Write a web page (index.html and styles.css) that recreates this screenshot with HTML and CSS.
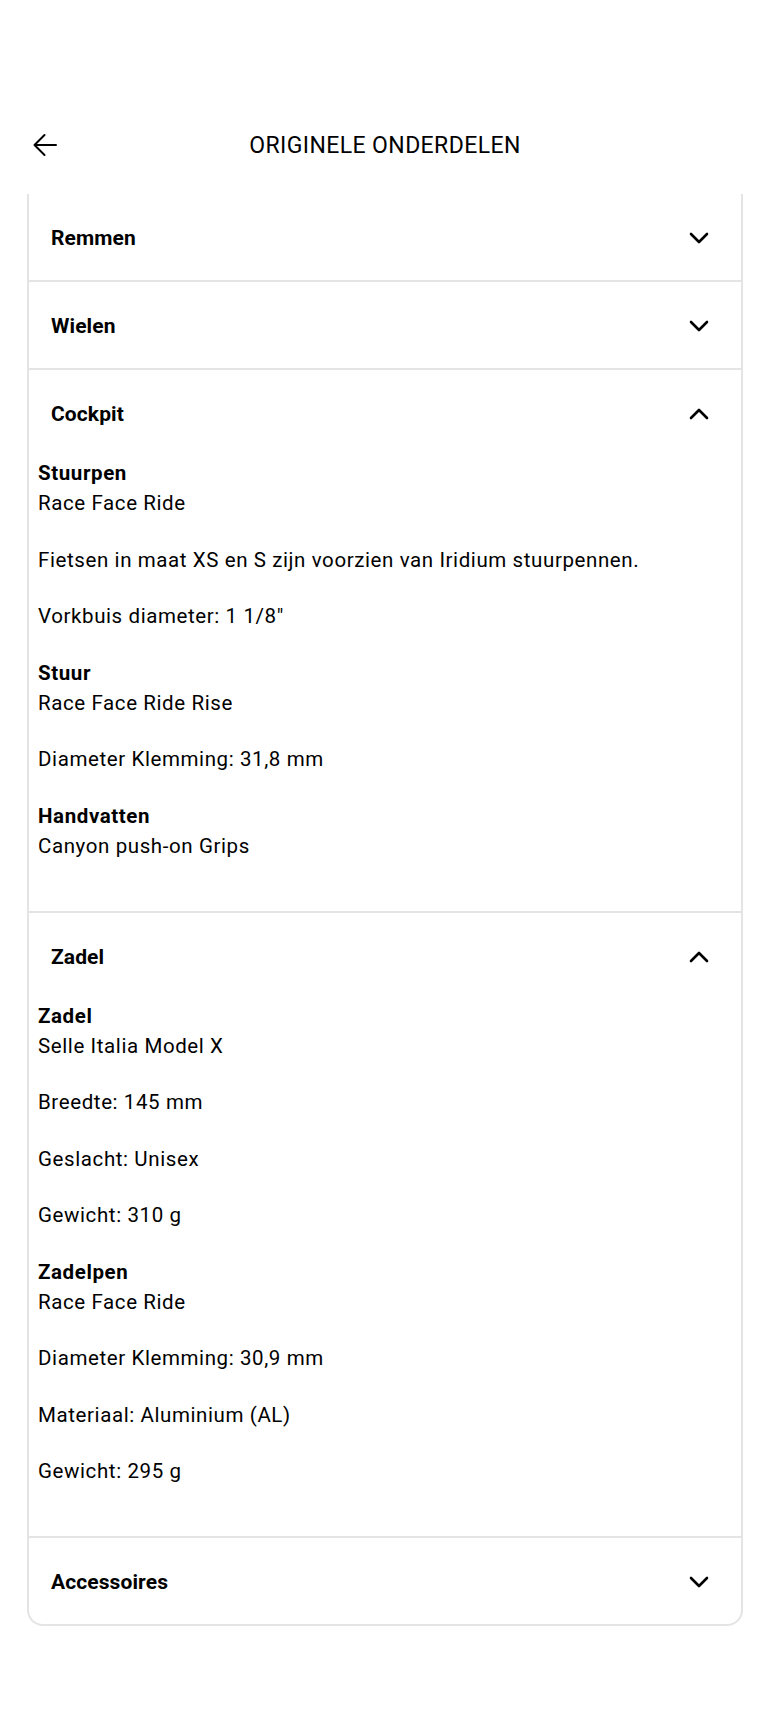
FILE: index.html
```html
<!DOCTYPE html>
<html lang="nl">
<head>
<meta charset="utf-8">
<title>Originele onderdelen</title>
<link rel="stylesheet" href="styles.css">
</head>
<body>
<header class="topbar">
  <button class="back" aria-label="Terug">
    <svg width="26" height="24" viewBox="0 0 26 24" fill="none" stroke="#000" stroke-width="2" stroke-linecap="round" stroke-linejoin="round"><path d="M24 12H2.5M12.5 2L2.5 12L12.5 22"/></svg>
  </button>
  <h1 class="title">ORIGINELE ONDERDELEN</h1>
  <span></span>
</header>

<main class="card">
  <section class="part">
    <div class="part-head"><span>Remmen</span>
      <svg class="chev" width="20" height="12" viewBox="0 0 20 12" fill="none" stroke="#000" stroke-width="2.6" stroke-linecap="round" stroke-linejoin="round"><path d="M2 2L10 10L18 2"/></svg>
    </div>
  </section>
  <section class="part">
    <div class="part-head"><span>Wielen</span>
      <svg class="chev" width="20" height="12" viewBox="0 0 20 12" fill="none" stroke="#000" stroke-width="2.6" stroke-linecap="round" stroke-linejoin="round"><path d="M2 2L10 10L18 2"/></svg>
    </div>
  </section>
  <section class="part open">
    <div class="part-head"><span>Cockpit</span>
      <svg class="chev" width="20" height="12" viewBox="0 0 20 12" fill="none" stroke="#000" stroke-width="2.6" stroke-linecap="round" stroke-linejoin="round"><path d="M2 10L10 2L18 10"/></svg>
    </div>
    <div class="part-body">
      <div class="spec"><p class="label">Stuurpen</p><p>Race Face Ride</p></div>
      <div class="spec"><p>Fietsen in maat XS en S zijn voorzien van Iridium stuurpennen.</p></div>
      <div class="spec"><p>Vorkbuis diameter: 1 1/8"</p></div>
      <div class="spec"><p class="label">Stuur</p><p>Race Face Ride Rise</p></div>
      <div class="spec"><p>Diameter Klemming: 31,8 mm</p></div>
      <div class="spec"><p class="label">Handvatten</p><p>Canyon push-on Grips</p></div>
    </div>
  </section>
  <section class="part open">
    <div class="part-head"><span>Zadel</span>
      <svg class="chev" width="20" height="12" viewBox="0 0 20 12" fill="none" stroke="#000" stroke-width="2.6" stroke-linecap="round" stroke-linejoin="round"><path d="M2 10L10 2L18 10"/></svg>
    </div>
    <div class="part-body">
      <div class="spec"><p class="label">Zadel</p><p>Selle Italia Model X</p></div>
      <div class="spec"><p>Breedte: 145 mm</p></div>
      <div class="spec"><p>Geslacht: Unisex</p></div>
      <div class="spec"><p>Gewicht: 310 g</p></div>
      <div class="spec"><p class="label">Zadelpen</p><p>Race Face Ride</p></div>
      <div class="spec"><p>Diameter Klemming: 30,9 mm</p></div>
      <div class="spec"><p>Materiaal: Aluminium (AL)</p></div>
      <div class="spec"><p>Gewicht: 295 g</p></div>
    </div>
  </section>
  <section class="part">
    <div class="part-head"><span>Accessoires</span>
      <svg class="chev" width="20" height="12" viewBox="0 0 20 12" fill="none" stroke="#000" stroke-width="2.6" stroke-linecap="round" stroke-linejoin="round"><path d="M2 2L10 10L18 2"/></svg>
    </div>
  </section>
</main>
</body>
</html>
```

FILE: styles.css
```css
* { box-sizing: border-box; }

body {
  margin: 0;
  background: #fff;
  color: #000;
  font-family: Roboto, "Liberation Sans", sans-serif;
}

.topbar {
  display: grid;
  grid-template-columns: 1fr auto 1fr;
  align-items: center;
  height: 194px;
  padding: 120px 0 24px;
}

.back {
  justify-self: start;
  margin-left: 32px;
  padding: 0;
  border: 0;
  background: none;
  display: flex;
}

.title {
  margin: 0;
  font-size: 23px;
  font-weight: 400;
  letter-spacing: 0.4px;
}

.card {
  margin: 0 27px 60px;
  border: 2px solid #e4e4e4;
  border-top: 0;
  border-radius: 0 0 16px 16px;
  overflow: hidden;
}

.part + .part {
  border-top: 2px solid #e4e4e4;
}

.part-head {
  height: 86px;
  display: flex;
  align-items: center;
  justify-content: space-between;
  padding: 2px 32px 0 22px;
  font-size: 21px;
  font-weight: 700;
  letter-spacing: 0.1px;
}

.part-body {
  padding: 2px 9px 50px;
  display: flex;
  flex-direction: column;
  gap: 26.5px;
  font-size: 20.5px;
  letter-spacing: 0.6px;
}

.spec p {
  margin: 0;
  line-height: 30px;
}

.spec .label {
  font-weight: 700;
}
```
